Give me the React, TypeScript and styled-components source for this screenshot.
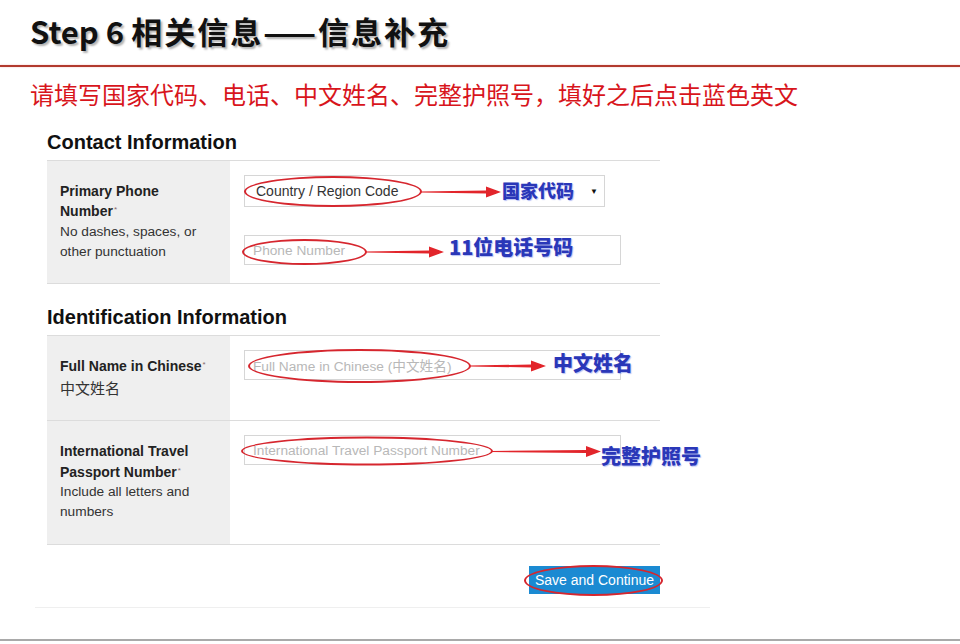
import React from 'react';
import styled, { createGlobalStyle } from 'styled-components';

const GlobalStyle = createGlobalStyle`
  html, body {
    margin: 0;
    padding: 0;
    background: #ffffff;
  }
  body {
    font-family: "Liberation Sans", Arial, "Noto Sans CJK SC", sans-serif;
    color: #222;
  }
  * {
    box-sizing: border-box;
  }
`;

const Page = styled.div`
  width: 960px;
  height: 644px;
  display: flex;
  flex-direction: column;
  overflow: hidden;
`;

const Header = styled.header`
  height: 65px;
  display: flex;
  align-items: center;
  padding: 0 0 5px 30px;
`;

const Title = styled.h1`
  margin: 0;
  font-family: "Noto Sans CJK SC", sans-serif;
  font-size: 31px;
  font-weight: 700;
  color: #111;
  text-shadow: 2px 2px 2px rgba(0, 0, 0, 0.3);
`;

const TitleCjk = styled.span`
  letter-spacing: 2px;
`;

const RedRule = styled.div`
  height: 2px;
  background: #b23a2e;
  box-shadow: 0 0 2px rgba(220, 80, 80, 0.35);
`;

const Instruction = styled.p`
  margin: 15px 0 0 30px;
  font-family: "Noto Sans CJK SC", sans-serif;
  font-size: 24px;
  line-height: 24px;
  color: #d8151c;
`;

const Panel = styled.div`
  margin: 16px 0 0 35px;
  width: 675px;
  padding: 0 50px 0 12px;
  border-bottom: 1px solid #efefef;
`;

const SectionTitle = styled.h2<{ $h: number }>`
  margin: 0;
  height: ${p => p.$h}px;
  display: flex;
  align-items: flex-end;
  padding-bottom: 7px;
  font-size: 20px;
  line-height: 22px;
  font-weight: 700;
  color: #111;
`;

const Table = styled.div`
  border-top: 1px solid #dcdcdc;
`;

const Row = styled.div`
  display: flex;
  border-bottom: 1px solid #dcdcdc;
`;

const LabelCell = styled.div`
  width: 183px;
  flex-shrink: 0;
  background: #efefef;
  padding: 20px 18px 21px 13px;
  font-size: 13.7px;
  line-height: 20.3px;
  color: #333;
`;

const LabelTitle = styled.div`
  font-size: 14px;
  font-weight: 700;
  color: #222;
`;

const NoWrap = styled.span`
  white-space: nowrap;
`;

const Required = styled.span`
  margin-left: 1px;
  font-size: 8px;
  line-height: 1;
  vertical-align: 4px;
  font-weight: 400;
  color: #8a6a6a;
`;

const ChineseHint = styled.div`
  font-family: "Noto Sans CJK SC", sans-serif;
  font-size: 15px;
  line-height: 23px;
  color: #333;
`;

const FieldCell = styled.div`
  flex: 1;
  padding: 14px 14px 0;
  display: flex;
  flex-direction: column;
  gap: 28px;
`;

const Control = styled.div<{ $w: number; $h: number }>`
  position: relative;
  width: ${p => p.$w}px;
  height: ${p => p.$h}px;
  border: 1px solid #d6d6d6;
  background: #fff;
  display: flex;
  align-items: center;
  justify-content: space-between;
  font-size: 13.7px;
`;

const SelectValue = styled.span`
  padding-left: 11px;
  font-size: 14px;
  color: #333;
`;

const Caret = styled.span`
  font-size: 8px;
  color: #111;
  padding-right: 6px;
`;

const Placeholder = styled.span`
  padding-left: 8px;
  color: #b8b8b8;
  white-space: nowrap;
`;

const Callout = styled.div<{ $dx: number; $dy: number }>`
  position: absolute;
  left: ${p => p.$dx}px;
  top: 50%;
  transform: translateY(calc(-50% + ${p => p.$dy}px));
  display: flex;
  align-items: center;
  pointer-events: none;
`;

const Ellipse = styled.span<{ $w: number; $h: number }>`
  display: block;
  width: ${p => p.$w}px;
  height: ${p => p.$h}px;
  border: 2px solid #d6262e;
  border-radius: 50%;
  flex-shrink: 0;
`;

const ArrowSvg = styled.svg`
  display: block;
  flex-shrink: 0;
  margin-left: -2px;
`;

const Note = styled.span<{ $size: number; $ml: number; $dy: number }>`
  margin-left: ${p => p.$ml}px;
  position: relative;
  top: ${p => p.$dy}px;
  font-family: "Noto Sans CJK SC", sans-serif;
  font-size: ${p => p.$size}px;
  font-weight: 900;
  line-height: 1;
  color: #2a37b8;
  white-space: nowrap;
  text-shadow: 1px 1px 1px rgba(90, 110, 230, 0.45);
`;

const Actions = styled.div`
  display: flex;
  justify-content: flex-end;
  padding: 21px 0 13px;
`;

const SaveButton = styled.button`
  position: relative;
  width: 131px;
  height: 28px;
  border: none;
  background: #1b8ad2;
  color: #fff;
  font-family: "Liberation Sans", Arial, sans-serif;
  font-size: 14px;
  padding: 0;
  cursor: pointer;
`;

const BottomRule = styled.div`
  margin-top: auto;
  margin-bottom: 3px;
  height: 2px;
  background: #a9a9a9;
`;

const Arrow = ({ w }: { w: number }) => (
  <ArrowSvg width={w} height={14} viewBox={`0 0 ${w} 14`}>
    <polygon
      points={`0,6.4 ${w - 15},5.6 ${w - 15},1.5 ${w},7 ${w - 15},12.5 ${w - 15},8.4 0,7.6`}
      fill="#e2252b"
    />
  </ArrowSvg>
);

const App = () => (
  <>
    <GlobalStyle />
    <Page>
      <Header>
        <Title>
          Step 6 <TitleCjk>相关信息——信息补充</TitleCjk>
        </Title>
      </Header>
      <RedRule />
      <Instruction>请填写国家代码、电话、中文姓名、完整护照号，填好之后点击蓝色英文</Instruction>

      <Panel>
        <SectionTitle $h={38}>Contact Information</SectionTitle>
        <Table>
          <Row>
            <LabelCell>
              <LabelTitle>
                Primary Phone{' '}
                <NoWrap>
                  Number<Required>*</Required>
                </NoWrap>
              </LabelTitle>
              No dashes, spaces, or other punctuation
            </LabelCell>
            <FieldCell>
              <Control $w={361} $h={32}>
                <SelectValue>Country / Region Code</SelectValue>
                <Caret>▼</Caret>
                <Callout $dx={-1} $dy={0.5}>
                  <Ellipse $w={178} $h={31} />
                  <Arrow w={81} />
                  <Note $size={18} $ml={1} $dy={-2}>国家代码</Note>
                </Callout>
              </Control>
              <Control $w={377} $h={30}>
                <Placeholder>Phone Number</Placeholder>
                <Callout $dx={-3} $dy={2}>
                  <Ellipse $w={125} $h={26} />
                  <Arrow w={79} />
                  <Note $size={20} $ml={5} $dy={-5}>11位电话号码</Note>
                </Callout>
              </Control>
            </FieldCell>
          </Row>
        </Table>

        <SectionTitle $h={51}>Identification Information</SectionTitle>
        <Table>
          <Row>
            <LabelCell>
              <LabelTitle>
                Full Name in{' '}
                <NoWrap>
                  Chinese<Required>*</Required>
                </NoWrap>
              </LabelTitle>
              <ChineseHint>中文姓名</ChineseHint>
            </LabelCell>
            <FieldCell>
              <Control $w={377} $h={30}>
                <Placeholder>Full Name in Chinese (中文姓名)</Placeholder>
                <Callout $dx={3} $dy={1}>
                  <Ellipse $w={223} $h={34} />
                  <Arrow w={77} />
                  <Note $size={20} $ml={7} $dy={-3}>中文姓名</Note>
                </Callout>
              </Control>
            </FieldCell>
          </Row>
          <Row>
            <LabelCell>
              <LabelTitle>
                International Travel{' '}
                <NoWrap>
                  Passport Number<Required>*</Required>
                </NoWrap>
              </LabelTitle>
              Include all letters and numbers
            </LabelCell>
            <FieldCell>
              <Control $w={377} $h={30}>
                <Placeholder>International Travel Passport Number</Placeholder>
                <Callout $dx={-4} $dy={1}>
                  <Ellipse $w={252} $h={29} />
                  <Arrow w={110} />
                  <Note $size={20} $ml={0} $dy={4}>完整护照号</Note>
                </Callout>
              </Control>
            </FieldCell>
          </Row>
        </Table>

        <Actions>
          <SaveButton>
            Save and Continue
            <Callout $dx={-5} $dy={0.5}>
              <Ellipse $w={139} $h={31} />
            </Callout>
          </SaveButton>
        </Actions>
      </Panel>

      <BottomRule />
    </Page>
  </>
);

export default App;
